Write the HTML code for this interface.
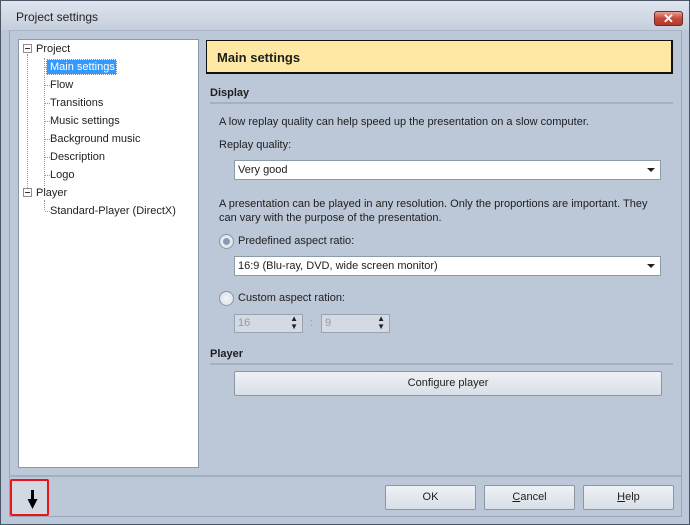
<!DOCTYPE html>
<html><head><style>
*{margin:0;padding:0;box-sizing:border-box}
body{width:690px;height:525px;overflow:hidden;font-family:"Liberation Sans",sans-serif;font-size:11px;color:#1e1e1e;background:#bcc7d7;position:relative}
.win{position:absolute;left:0;top:0;width:690px;height:525px;border:1px solid #4a5567;background:#bcc7d7}
.title{position:absolute;left:0;top:0;width:688px;height:29px;background:linear-gradient(#dfe5ee,#c5cedc)}
.title span{position:absolute;left:15px;top:9px;font-size:12px;color:#222}
.close{position:absolute;left:653px;top:10px;width:29px;height:15px;border:1px solid #6e2a24;border-radius:3px;background:linear-gradient(#e9a195,#c4483a 50%,#b03a2e);color:#fff;font-size:13px;font-weight:bold;text-align:center;line-height:13px}
.frame{position:absolute;left:8px;top:29px;width:673px;height:487px;border:1px solid #9aa7ba;border-top-color:#aab5c6}
.tree{position:absolute;left:17px;top:38px;width:181px;height:429px;background:#fff;border:1px solid #8c97a8}
.tree div{position:absolute;white-space:nowrap}
.box{width:9px;height:9px;border:1px solid #8d8d8d;background:#fff}
.box:after{content:"";position:absolute;left:1px;top:3px;width:5px;height:1px;background:#333}
.dv{border-left:1px dotted #999}
.dh{border-top:1px dotted #999;height:0}
.hdr{position:absolute;left:205px;top:39px;width:467px;height:34px;background:#ffe8a3;border:2px solid #111;border-width:1px 2px 2px 1px;font-weight:bold;font-size:13px;padding:9px 0 0 10px}
.sec{position:absolute;left:209px;font-weight:bold;width:463px;border-bottom:2px solid #a5b1c2;padding-bottom:3px}
.t{position:absolute;white-space:nowrap}
.combo{position:absolute;height:20px;background:#fff;border:1px solid #8e9aab;padding:3px 0 0 3px}
.combo:after{content:"";position:absolute;right:5px;top:7px;border:4px solid transparent;border-top:4px solid #222;border-bottom:0}
.radio{position:absolute;width:15px;height:15px;border-radius:50%;border:1px solid #8c95a3;background:radial-gradient(#f3f5f8,#d9dee6)}
.spin{position:absolute;height:19px;background:#d3dae4;border:1px solid #98a4b4;color:#999;padding:2px 0 0 3px}
.btn{position:absolute;height:25px;border:1px solid #8b95a4;border-radius:2px;background:linear-gradient(#eef1f5,#d9dfe7);text-align:center;line-height:23px}
</style></head><body>
<div class="win">
<div class="title"><span>Project settings</span><div class="close">✕</div></div>
<div class="frame"></div>
<div style="position:absolute;left:9px;top:474px;width:671px;height:2px;background:#a3aebf"></div>
<div class="tree">
 <div class="box" style="left:4px;top:4px"></div>
 <div class="dv" style="left:8px;top:14px;height:140px"></div>
 <div class="dv" style="left:25px;top:18px;height:128px"></div>
 <div class="t" style="left:17px;top:3px">Project</div>
 <div class="dh" style="left:26px;top:27px;width:5px"></div>
 <div style="left:27px;top:19px;width:71px;height:16px;background:#3399ff;border:1px dotted #fff"></div>
 <div class="t" style="left:31px;top:21px;color:#fff">Main settings</div>
 <div class="dh" style="left:26px;top:45px;width:5px"></div><div class="t" style="left:31px;top:39px">Flow</div>
 <div class="dh" style="left:26px;top:63px;width:5px"></div><div class="t" style="left:31px;top:57px">Transitions</div>
 <div class="dh" style="left:26px;top:81px;width:5px"></div><div class="t" style="left:31px;top:75px">Music settings</div>
 <div class="dh" style="left:26px;top:99px;width:5px"></div><div class="t" style="left:31px;top:93px">Background music</div>
 <div class="dh" style="left:26px;top:117px;width:5px"></div><div class="t" style="left:31px;top:111px">Description</div>
 <div class="dh" style="left:26px;top:135px;width:5px"></div><div class="t" style="left:31px;top:129px">Logo</div>
 <div class="box" style="left:4px;top:148px"></div>
 <div class="t" style="left:17px;top:147px">Player</div>
 <div class="dv" style="left:25px;top:160px;height:10px"></div>
 <div class="dh" style="left:26px;top:171px;width:5px"></div><div class="t" style="left:31px;top:165px">Standard-Player (DirectX)</div>
</div>
<div class="hdr">Main settings</div>
<div class="sec" style="top:86px">Display</div>
<div class="t" style="left:218px;top:115px">A low replay quality can help speed up the presentation on a slow computer.</div>
<div class="t" style="left:218px;top:138px">Replay quality:</div>
<div class="combo" style="left:233px;top:159px;width:427px">Very good</div>
<div class="t" style="left:218px;top:196px;line-height:14px">A presentation can be played in any resolution. Only the proportions are important. They<br>can vary with the purpose of the presentation.</div>
<div class="radio" style="left:218px;top:233px"><div style="position:absolute;left:3px;top:3px;width:7px;height:7px;border-radius:50%;background:#8a9ab5"></div></div>
<div class="t" style="left:237px;top:234px">Predefined aspect ratio:</div>
<div class="combo" style="left:233px;top:255px;width:427px">16:9 (Blu-ray, DVD, wide screen monitor)</div>
<div class="radio" style="left:218px;top:290px"></div>
<div class="t" style="left:237px;top:291px">Custom aspect ration:</div>
<div class="spin" style="left:233px;top:313px;width:69px">16<span style="position:absolute;right:4px;top:0;color:#222;font-size:8px;line-height:8px">▲<br>▼</span></div>
<div class="t" style="left:309px;top:316px;color:#999">:</div>
<div class="spin" style="left:320px;top:313px;width:69px">9<span style="position:absolute;right:4px;top:0;color:#222;font-size:8px;line-height:8px">▲<br>▼</span></div>
<div class="sec" style="top:347px">Player</div>
<div class="btn" style="left:233px;top:370px;width:428px">Configure player</div>
<div class="btn" style="left:384px;top:484px;width:91px">OK</div>
<div class="btn" style="left:483px;top:484px;width:91px"><u>C</u>ancel</div>
<div class="btn" style="left:582px;top:484px;width:91px"><u>H</u>elp</div>
<div style="position:absolute;left:9px;top:478px;width:39px;height:37px;border:2px solid #e8141b;border-radius:2px;background:#d3d9e2">
<svg width="35" height="33" style="position:absolute;left:0;top:0"><path d="M20.5 9v11" stroke="#000" stroke-width="3"/><path d="M15.5 18h10l-5 10z" fill="#000"/></svg></div>
</div>
</body></html>
